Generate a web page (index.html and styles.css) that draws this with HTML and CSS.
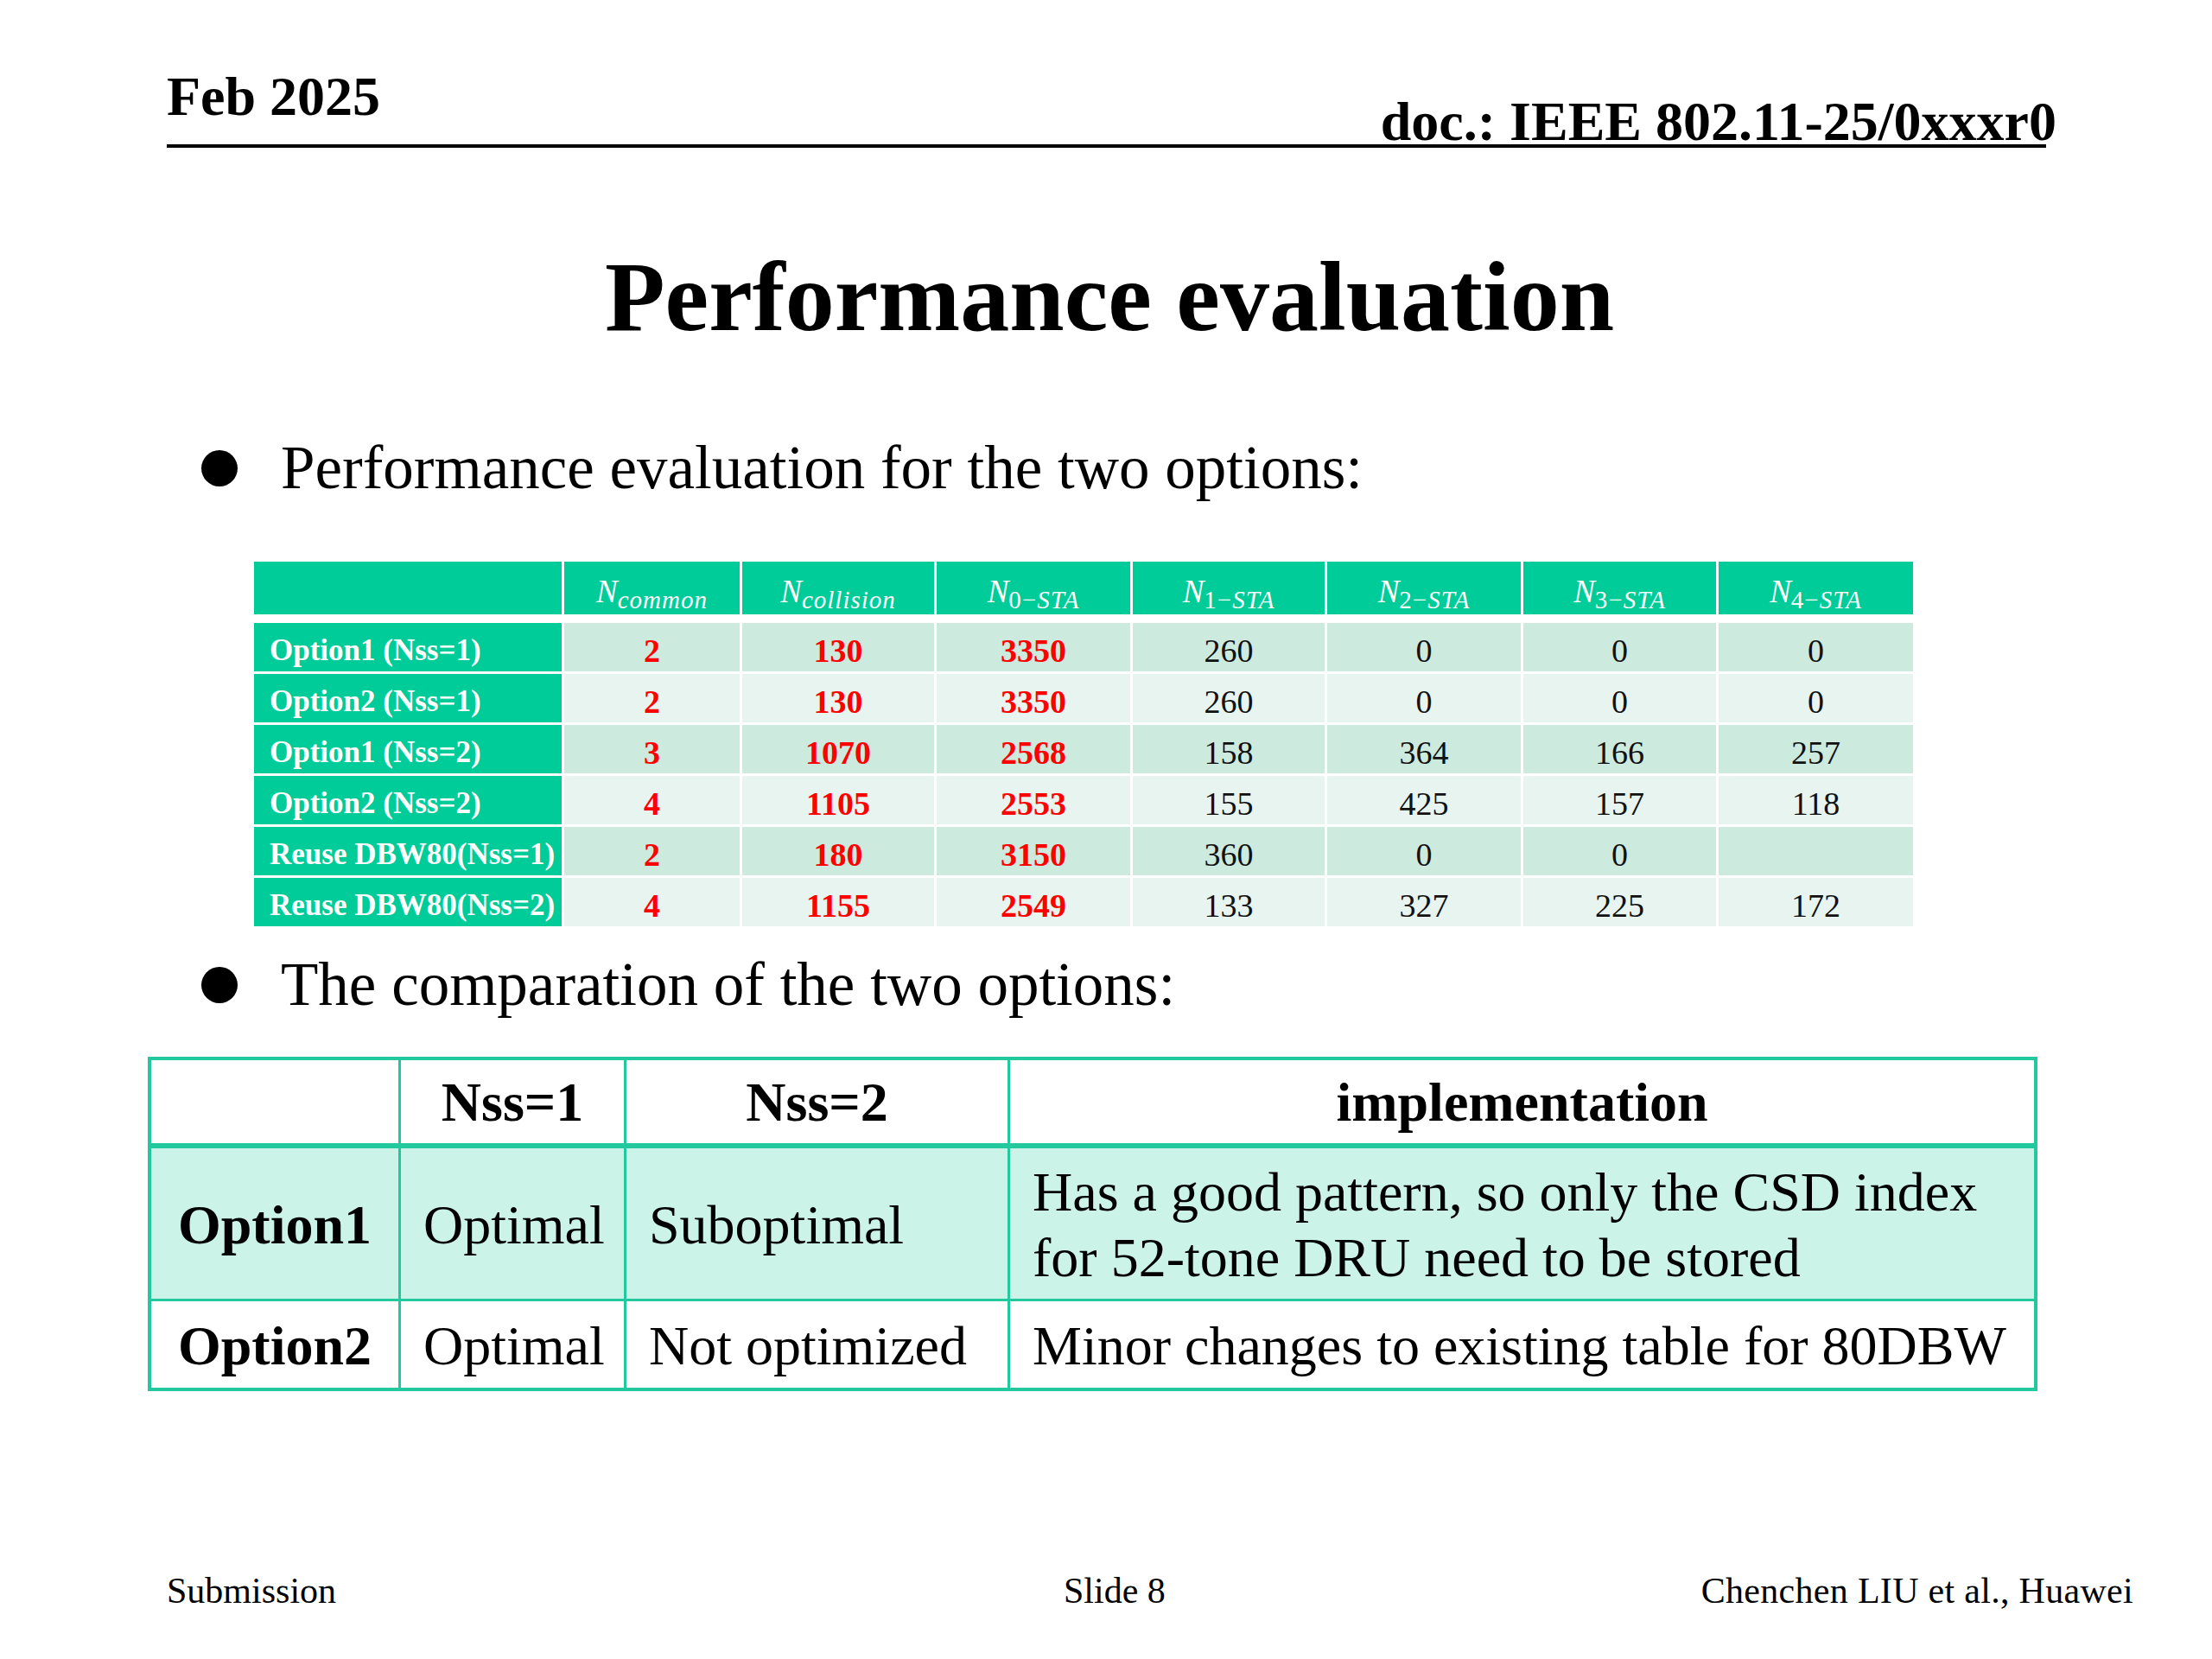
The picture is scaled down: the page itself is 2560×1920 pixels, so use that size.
FILE: index.html
```html
<!DOCTYPE html>
<html>
<head>
<meta charset="utf-8">
<link rel="stylesheet" href="styles.css">
</head>
<body>
<div class="slide">
  <div class="header">
    <div class="date">Feb 2025</div>
    <div class="doc">doc.: IEEE 802.11-25/0xxxr0</div>
  </div>

  <h1 class="title">Performance evaluation</h1>

  <div class="bullet first"><span class="dot"></span><span>Performance evaluation for the two options:</span></div>

  <div class="perf">
    <div class="perf-head">
      <div class="ph"></div>
      <div class="ph"><span class="mn">N</span><span class="ms">common</span></div>
      <div class="ph"><span class="mn">N</span><span class="ms">collision</span></div>
      <div class="ph"><span class="mn">N</span><span class="ms"><span class="up">0−</span>STA</span></div>
      <div class="ph"><span class="mn">N</span><span class="ms"><span class="up">1−</span>STA</span></div>
      <div class="ph"><span class="mn">N</span><span class="ms"><span class="up">2−</span>STA</span></div>
      <div class="ph"><span class="mn">N</span><span class="ms"><span class="up">3−</span>STA</span></div>
      <div class="ph"><span class="mn">N</span><span class="ms"><span class="up">4−</span>STA</span></div>
    </div>
    <div class="perf-body">
      <div class="pl">Option1 (Nss=1)</div>
      <div class="pc dark red">2</div><div class="pc dark red">130</div><div class="pc dark red">3350</div>
      <div class="pc dark">260</div><div class="pc dark">0</div><div class="pc dark">0</div><div class="pc dark">0</div>

      <div class="pl">Option2 (Nss=1)</div>
      <div class="pc light red">2</div><div class="pc light red">130</div><div class="pc light red">3350</div>
      <div class="pc light">260</div><div class="pc light">0</div><div class="pc light">0</div><div class="pc light">0</div>

      <div class="pl">Option1 (Nss=2)</div>
      <div class="pc dark red">3</div><div class="pc dark red">1070</div><div class="pc dark red">2568</div>
      <div class="pc dark">158</div><div class="pc dark">364</div><div class="pc dark">166</div><div class="pc dark">257</div>

      <div class="pl">Option2 (Nss=2)</div>
      <div class="pc light red">4</div><div class="pc light red">1105</div><div class="pc light red">2553</div>
      <div class="pc light">155</div><div class="pc light">425</div><div class="pc light">157</div><div class="pc light">118</div>

      <div class="pl">Reuse DBW80(Nss=1)</div>
      <div class="pc dark red">2</div><div class="pc dark red">180</div><div class="pc dark red">3150</div>
      <div class="pc dark">360</div><div class="pc dark">0</div><div class="pc dark">0</div><div class="pc dark"></div>

      <div class="pl">Reuse DBW80(Nss=2)</div>
      <div class="pc light red">4</div><div class="pc light red">1155</div><div class="pc light red">2549</div>
      <div class="pc light">133</div><div class="pc light">327</div><div class="pc light">225</div><div class="pc light">172</div>
    </div>
  </div>

  <div class="bullet second"><span class="dot"></span><span>The comparation of the two options:</span></div>

  <div class="cmp">
    <div class="cc hd"></div>
    <div class="cc hd center bold">Nss=1</div>
    <div class="cc hd center bold">Nss=2</div>
    <div class="cc hd center bold">implementation</div>

    <div class="cc mint center bold">Option1</div>
    <div class="cc mint left">Optimal</div>
    <div class="cc mint left">Suboptimal</div>
    <div class="cc mint left">Has a good pattern, so only the CSD index<br>for 52-tone DRU need to be stored</div>

    <div class="cc center bold">Option2</div>
    <div class="cc left">Optimal</div>
    <div class="cc left">Not optimized</div>
    <div class="cc left">Minor changes to existing table for 80DBW</div>
  </div>

  <div class="footer">
    <div>Submission</div>
    <div>Slide 8</div>
    <div class="right">Chenchen LIU et al., Huawei</div>
  </div>
</div>
</body>
</html>
```

FILE: styles.css
```css
html, body {
  margin: 0;
  padding: 0;
  background: #ffffff;
}

.slide {
  width: 2560px;
  height: 1920px;
  box-sizing: border-box;
  padding-top: 80px;
  background: #ffffff;
  color: #000000;
  font-family: "Liberation Serif", "Times New Roman", serif;
  overflow: hidden;
}

/* Header */
.header {
  display: flex;
  justify-content: space-between;
  align-items: flex-start;
  margin: 0 192px 0 193px;
  height: 87px;
  border-bottom: 4px solid #000000;
  font-size: 64px;
  line-height: 64px;
  font-weight: bold;
}

.doc {
  margin-top: 29px;
  margin-right: -12px;
  white-space: nowrap;
}

/* Title */
.title {
  margin: 116px 0 0 0;
  padding-left: 8px;
  text-align: center;
  font-size: 114px;
  line-height: 114px;
  font-weight: bold;
}

/* Bullets */
.bullet {
  display: flex;
  align-items: center;
  padding-left: 233px;
  font-size: 71px;
  line-height: 71px;
  white-space: nowrap;
}

.bullet.first {
  margin-top: 105px;
}

.bullet.second {
  margin-top: 32px;
}

.dot {
  flex: none;
  width: 42px;
  height: 42px;
  border-radius: 50%;
  background: #000000;
  margin-right: 50px;
}

/* Performance table */
.perf {
  margin: 73px 0 0 294px;
  width: 1920px;
}

.perf-head,
.perf-body {
  display: grid;
  grid-template-columns: 356px 203px 222px 224px 222px 224px 223px 225px;
  column-gap: 3px;
}

.perf-head {
  grid-template-rows: 61px;
}

.perf-body {
  margin-top: 10px;
  grid-auto-rows: 56px;
  row-gap: 3px;
}

.ph {
  background: #00cc99;
  color: #ffffff;
  display: flex;
  align-items: flex-end;
  justify-content: center;
  padding-bottom: 8px;
  box-sizing: border-box;
  font-style: italic;
  white-space: nowrap;
}

.mn {
  font-size: 37px;
  line-height: 37px;
}

.ms {
  font-size: 29px;
  line-height: 29px;
  letter-spacing: 1px;
  position: relative;
  top: 6px;
}

.ms .up {
  font-style: normal;
}

.pl {
  background: #00cc99;
  color: #ffffff;
  font-weight: bold;
  font-size: 35px;
  line-height: 50px;
  padding: 7px 0 0 18px;
  white-space: nowrap;
}

.pc {
  font-size: 38px;
  line-height: 50px;
  padding-top: 7px;
  text-align: center;
  color: #111111;
}

.pc.dark {
  background: #cdeadf;
}

.pc.light {
  background: #e7f4ef;
}

.pc.red {
  color: #ff0000;
  font-weight: bold;
}

/* Comparison table */
.cmp {
  display: grid;
  margin: 48px 0 0 171px;
  width: 2187px;
  box-sizing: border-box;
  padding: 4px;
  gap: 3px;
  background: #22c99f;
  grid-template-columns: 286px 258px 441px 1185px;
  grid-template-rows: 99px 174px 100px;
}

.cc {
  background: #ffffff;
  display: flex;
  align-items: center;
  font-size: 64px;
  line-height: 76px;
  padding-top: 3px;
  box-sizing: border-box;
  white-space: nowrap;
}

.cc.hd {
  margin-bottom: 3px;
  padding-top: 2px;
}

.cc.mint {
  background: #ccf3e8;
}

.cc.center {
  justify-content: center;
}

.cc.left {
  padding-left: 26px;
}

.cc.bold {
  font-weight: bold;
}

/* Footer */
.footer {
  display: grid;
  grid-template-columns: 1038px auto 1fr;
  margin-top: 210px;
  padding: 0 91px 0 193px;
  font-size: 42px;
  line-height: 42px;
  white-space: nowrap;
}

.footer .right {
  justify-self: end;
  letter-spacing: 0.3px;
}
```
